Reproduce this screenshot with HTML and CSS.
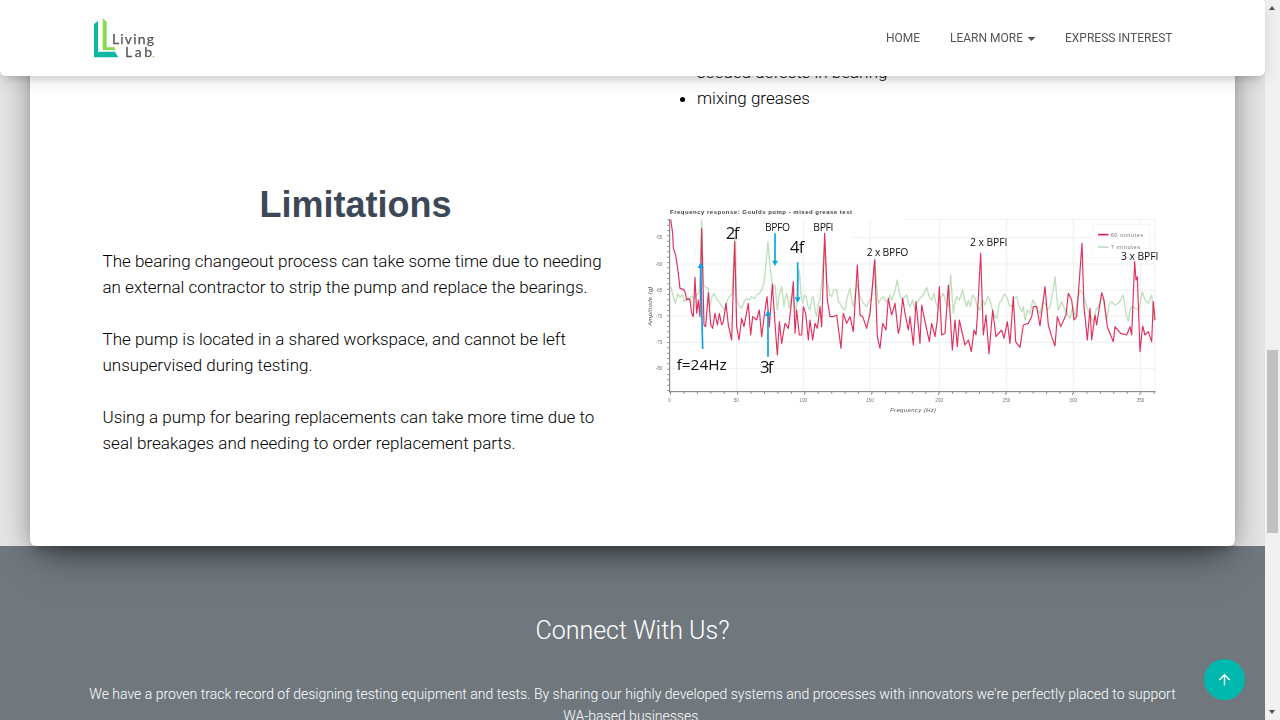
FILE: index.html
```html
<!DOCTYPE html>
<html lang="en">
<head>
<meta charset="utf-8">
<title>Living Lab</title>
<link rel="stylesheet" href="styles.css">
</head>
<body>
<div class="viewport">
  <header class="navbar">
    <a class="brand" href="#">
      <svg class="logo" viewBox="0 0 61 42" width="61" height="42">
        <path class="logo-teal" d="M0 6 L4 3 V33.7 H21 L24.3 39.3 H0 Z"/>
        <path class="logo-green" d="M8.7 0.3 L12.7 3.7 V29.3 H21 V32 H8.7 Z"/>
        <text class="logo-text" x="18" y="25.6" textLength="42">Living</text>
        <text class="logo-text" x="31" y="39.3" textLength="27">Lab</text>
        <circle class="logo-green" cx="59.5" cy="38.6" r="0.9"/>
      </svg>
    </a>
    <nav class="nav-links">
      <a href="#">Home</a>
      <a href="#">Learn More<span class="caret"></span></a>
      <a href="#">Express Interest</a>
    </nav>
  </header>

  <main class="page">
    <section class="card">
      <div class="row row-list">
        <div></div>
        <ul class="list">
          <li>seeded defects in bearing</li>
          <li>mixing greases</li>
        </ul>
      </div>
      <div class="row row-limits">
        <div>
          <h2 class="heading">Limitations</h2>
          <p class="copy">The bearing changeout process can take some time due to needing an external contractor to strip the pump and replace the bearings.</p>
          <p class="copy">The pump is located in a shared workspace, and cannot be left unsupervised during testing.</p>
          <p class="copy">Using a pump for bearing replacements can take more time due to seal breakages and needing to order replacement parts.</p>
        </div>
        <svg class="chart" viewBox="0 0 1560 660" width="520" height="220">
          <g class="grid">
            <path d="M790 58H1545M90 192H1545M90 270H1545M90 348H1545M90 427H1545M90 505H1545M640 113H1545"/>
            <path d="M290 60V575M490 60V575M690 60V575M898 60V575M1100 60V575M1300 60V575M1502 60V575M1545 58V575"/>
          </g>
          <polyline class="line-green" points="92,260 99,285 106,310 113,282 120,292 127,284 134,305 141,295 148,300 155,288 162,296 170,285 178,275 185,60 190,255 198,262 205,265 210,320 216,290 222,280 229,296 235,302 241,312 247,322 255,330 262,300 268,290 276,282 285,110 290,300 298,318 305,325 312,305 320,295 328,300 335,290 343,296 350,285 358,280 365,270 372,250 378,190 384,125 390,200 395,240 400,265 405,255 412,330 418,285 425,260 432,320 436,295 440,280 448,325 453,290 458,280 463,315 468,340 473,260 478,210 483,280 488,310 493,285 498,290 504,320 510,330 515,298 520,290 526,335 530,350 535,310 540,300 547,220 554,130 560,240 565,260 570,285 575,290 582,268 590,270 595,305 600,310 608,325 615,330 622,290 630,265 635,300 640,320 646,280 652,250 658,285 665,300 672,312 680,320 688,300 695,300 700,240 705,175 710,260 715,310 722,298 730,290 738,305 745,300 750,285 755,300 763,280 772,240 778,280 785,300 792,292 800,285 805,310 810,320 818,300 825,330 832,305 840,295 850,285 860,262 868,292 875,300 882,280 888,310 895,325 902,295 910,280 917,305 925,320 932,225 937,300 940,340 945,305 950,290 958,300 968,270 974,300 980,320 985,300 990,320 998,285 1005,295 1012,320 1020,330 1028,300 1035,315 1043,290 1050,300 1060,340 1070,355 1078,310 1085,300 1092,282 1100,290 1108,315 1115,320 1122,295 1130,290 1138,320 1145,335 1150,320 1155,360 1162,330 1170,340 1178,300 1185,310 1192,330 1200,340 1208,305 1215,310 1222,330 1230,320 1238,280 1245,230 1250,290 1255,330 1265,305 1275,330 1282,340 1290,355 1298,320 1305,350 1312,300 1320,270 1330,285 1340,320 1350,345 1360,365 1368,330 1375,320 1382,300 1390,295 1395,330 1400,360 1408,312 1415,305 1425,315 1435,310 1442,300 1450,285 1458,340 1465,365 1470,330 1475,320 1485,325 1497,330 1507,275 1515,300 1525,310 1535,285 1543,365"/>
          <polyline class="line-red" points="92,58 98,100 100,145 107,165 115,220 120,265 130,268 135,275 140,300 145,295 150,300 155,340 160,350 165,232 170,340 175,300 180,350 185,85 192,375 197,380 205,278 212,372 218,385 225,340 232,375 238,340 245,375 250,365 258,310 265,375 275,420 284,125 290,380 297,420 305,355 312,380 325,310 332,405 338,350 350,360 358,330 365,410 373,345 381,290 388,380 397,252 405,370 412,465 418,365 425,430 435,370 445,385 452,330 460,245 465,400 470,330 478,405 485,405 490,320 497,340 505,420 510,360 518,420 525,370 532,385 540,320 545,380 554,100 562,300 570,350 580,350 590,345 603,445 610,340 620,370 630,350 640,395 652,195 660,345 668,350 680,385 690,340 704,180 712,410 720,445 728,370 738,390 745,295 755,345 765,310 775,400 780,380 788,295 795,340 805,390 810,350 820,435 828,305 840,430 845,315 852,350 868,425 875,370 885,410 892,360 898,260 905,405 915,400 925,255 937,450 945,360 952,440 958,360 975,435 985,420 994,455 1002,390 1008,405 1012,350 1022,160 1030,405 1038,345 1047,462 1058,330 1068,410 1085,390 1092,415 1102,365 1110,430 1120,290 1127,425 1140,442 1150,375 1165,370 1175,350 1180,320 1190,320 1200,378 1215,260 1225,375 1235,410 1245,438 1252,350 1262,380 1278,345 1285,280 1295,300 1302,360 1310,350 1326,130 1332,320 1342,420 1350,325 1355,420 1365,345 1370,375 1385,278 1392,300 1402,380 1420,425 1425,380 1442,400 1460,405 1470,380 1475,405 1484,185 1488,240 1492,230 1500,455 1508,378 1515,405 1525,395 1535,425 1540,305 1545,360"/>
          <g class="axis">
            <path d="M89 58V577M88 575H1546"/>
          </g>
          <path class="ticks" d="M90 578H1546"/>
          <path class="ticks-major" d="M90 582H1546"/>
          <path class="ticks-left" d="M85 58V575"/>
          <g class="tick-text">
            <text x="47" y="118">-55</text><text x="47" y="197">-60</text><text x="47" y="275">-65</text><text x="47" y="353">-70</text><text x="47" y="432">-75</text><text x="47" y="510">-80</text>
            <text x="85" y="605">0</text><text x="281" y="605">50</text><text x="478" y="605">100</text><text x="678" y="605">150</text><text x="886" y="605">200</text><text x="1088" y="605">250</text><text x="1288" y="605">300</text><text x="1490" y="605">350</text>
          </g>
          <text class="axis-title" x="750" y="635" textLength="138">Frequency (Hz)</text>
          <text class="axis-title" transform="translate(36 378) rotate(-90)" textLength="118">Amplitude (g)</text>
          <text class="chart-title" x="90" y="43" textLength="546">Frequency response: Goulds pump - mixed grease test</text>
          <rect class="legend-box" x="1357" y="73" width="171" height="99"/>
          <path class="legend-red" d="M1374 104H1405"/>
          <path class="legend-green" d="M1374 141H1405"/>
          <text class="legend-text" x="1412" y="110" textLength="98">60 minutes</text>
          <text class="legend-text" x="1412" y="147" textLength="88">7 minutes</text>
          <g class="arrows">
            <path d="M188 447L182 200M405 100V190M473 187V298M384 470V340"/>
          </g>
          <g class="arrow-heads">
            <path d="M182 186L173 204H191Z"/>
            <path d="M405 198L396 182H414Z"/>
            <path d="M473 308L464 292H482Z"/>
            <path d="M384 330L375 348H393Z"/>
          </g>
          <g class="note-big">
            <text x="257" y="118" textLength="41">2f</text>
            <text x="450" y="160" textLength="43">4f</text>
            <text class="note-wide" x="110" y="510" textLength="150">f=24Hz</text>
            <text x="360" y="518" textLength="40">3f</text>
          </g>
          <g class="note-small">
            <text x="375" y="93" textLength="75">BPFO</text>
            <text x="520" y="93" textLength="60">BPFI</text>
            <text x="680" y="167" textLength="125">2 x BPFO</text>
            <text x="990" y="137" textLength="112">2 x BPFI</text>
            <text x="1443" y="180" textLength="112">3 x BPFI</text>
          </g>
        </svg>
      </div>
    </section>
    <footer class="footer">
      <h3 class="footer-title">Connect With Us?</h3>
      <p class="footer-copy">We have a proven track record of designing testing equipment and tests. By sharing our highly developed systems and processes with innovators we're perfectly placed to support WA&#8209;based businesses.</p>
    </footer>
  </main>

  <aside class="scrollbar">
    <span class="arrow-up"></span>
    <span class="thumb"></span>
    <span class="arrow-down"></span>
  </aside>

  <a class="fab" href="#" aria-label="Back to top">
    <svg viewBox="0 0 24 24" width="17" height="17"><path d="M4 12l1.41 1.41L11 7.83V20h2V7.83l5.58 5.59L20 12l-8-8-8 8z"/></svg>
  </a>
</div>
</body>
</html>
```
FILE: styles.css
```css
* { box-sizing: border-box; }
html, body { margin: 0; height: 720px; overflow: hidden; }
body { font-family: Roboto, "Liberation Sans", sans-serif; color: #000; background: #e5e5e5; }

.viewport { display: flex; width: 1280px; height: 720px; }

.page { width: 1265px; height: 720px; overflow: hidden; background: #e5e5e5; }

.navbar {
  position: fixed; top: 0; left: 0; z-index: 10;
  width: 1265px; height: 76px;
  display: flex; align-items: center; justify-content: space-between;
  padding: 0 78px 0 94px;
  background: #fff;
  border-radius: 0 3px 6px 6px;
  box-shadow: 0 4px 18px 0 rgba(0,0,0,.12), 0 7px 10px -5px rgba(0,0,0,.15);
}
.brand { display: flex; }
.logo { display: block; margin-top: 2px; }
.logo-teal { fill: #0db8a5; }
.logo-green { fill: #85dc4c; }
.logo-text { font: 400 14px Lato, "Open Sans", sans-serif; fill: #555; stroke: #555; stroke-width: .25; }

.nav-links { display: flex; transform: translateX(.5px); }
.nav-links a {
  padding: 0 15px;
  font-size: 12px; line-height: 18px; font-weight: 400;
  text-transform: uppercase; text-decoration: none; color: #555;
}
.caret {
  display: inline-block; vertical-align: middle; margin-left: 4px;
  border-top: 4px solid #555; border-left: 4px solid transparent; border-right: 4px solid transparent;
}

.card {
  position: relative; z-index: 2;
  margin: 0 30px;
  height: 546px;
  padding: 59px 0 0 72.5px;
  background: #fff;
  border-radius: 0 0 6px 6px;
  box-shadow: 0 16px 38px -12px rgba(0,0,0,.56), 0 4px 25px 0 rgba(0,0,0,.12), 0 8px 10px -5px rgba(0,0,0,.2);
}
.row { display: grid; grid-template-columns: 506px 520px; column-gap: 31.5px; }
.row-list { margin-bottom: 74px; }
.list { margin: 0; padding-left: 57px; font-size: 17px; line-height: 26px; font-weight: 300; }
.heading {
  margin: 0 0 23px; text-align: center;
  font: 700 36px/40px "Liberation Sans", Arial, sans-serif; color: #3c4858;
}
.copy { margin: 0 0 26px; font-size: 17px; line-height: 26px; font-weight: 300; }
.chart { display: block; margin-top: 15px; filter: blur(.35px); }

.grid path { fill: none; stroke: #efefef; stroke-width: 3; }
.line-green { fill: none; stroke: #bfdfbd; stroke-width: 4; stroke-linejoin: round; }
.line-red { fill: none; stroke: #e01e50; stroke-width: 3.5; stroke-linejoin: round; opacity: .92; }
.axis path { fill: none; stroke: #777; stroke-width: 3; }
.ticks { fill: none; stroke: #888; stroke-width: 6; stroke-dasharray: 3 37.3; }
.ticks-major { fill: none; stroke: #888; stroke-width: 4; stroke-dasharray: 3 198; }
.ticks-left { fill: none; stroke: #888; stroke-width: 6; stroke-dasharray: 3 13; }
.tick-text text { font: 400 14px "Liberation Sans", sans-serif; fill: #777; }
.axis-title { font: italic 400 18px "Liberation Sans", sans-serif; fill: #555; }
.chart-title { font: 700 18px "Liberation Sans", sans-serif; fill: #444; }
.legend-box { fill: #fff; stroke: #f2f2f2; stroke-width: 2; }
.legend-red { stroke: #e01e50; stroke-width: 5; }
.legend-green { stroke: #bfdfbd; stroke-width: 5; }
.legend-text { font: 400 17px "Liberation Sans", sans-serif; fill: #777; }
.arrows path { fill: none; stroke: #08a4e4; stroke-width: 5; }
.arrow-heads path { fill: #08a4e4; }
.note-big text { font: 400 50px "Open Sans", sans-serif; fill: #111; }
.note-big .note-wide { font-size: 46px; }
.note-small text { font: 400 31px "Open Sans", sans-serif; fill: #111; }

.footer {
  height: 174px;
  padding: 67px 85px 0;
  background: #70787e;
  color: #fff;
  text-align: center;
}
.footer-title { margin: 0 0 34px; font-size: 25px; line-height: 36px; font-weight: 300; }
.footer-copy { margin: 0; font-size: 14px; line-height: 22px; font-weight: 300; }

.scrollbar {
  position: relative;
  width: 15px; height: 720px; background: #f1f1f1;
}
.thumb { position: absolute; left: 2px; top: 350px; width: 11px; height: 183px; background: #c1c1c1; }
.arrow-up, .arrow-down {
  position: absolute; left: 4px; width: 0; height: 0;
  border-left: 3.5px solid transparent; border-right: 3.5px solid transparent;
}
.arrow-up { top: 6px; border-bottom: 4px solid #505050; }
.arrow-down { top: 710px; border-top: 4px solid #505050; }

.fab {
  position: fixed; left: 1204px; top: 659px; z-index: 11;
  width: 41px; height: 41px; border-radius: 50%;
  display: flex; align-items: center; justify-content: center;
  background: #00b8ad;
}
.fab svg { fill: #fff; }
```
